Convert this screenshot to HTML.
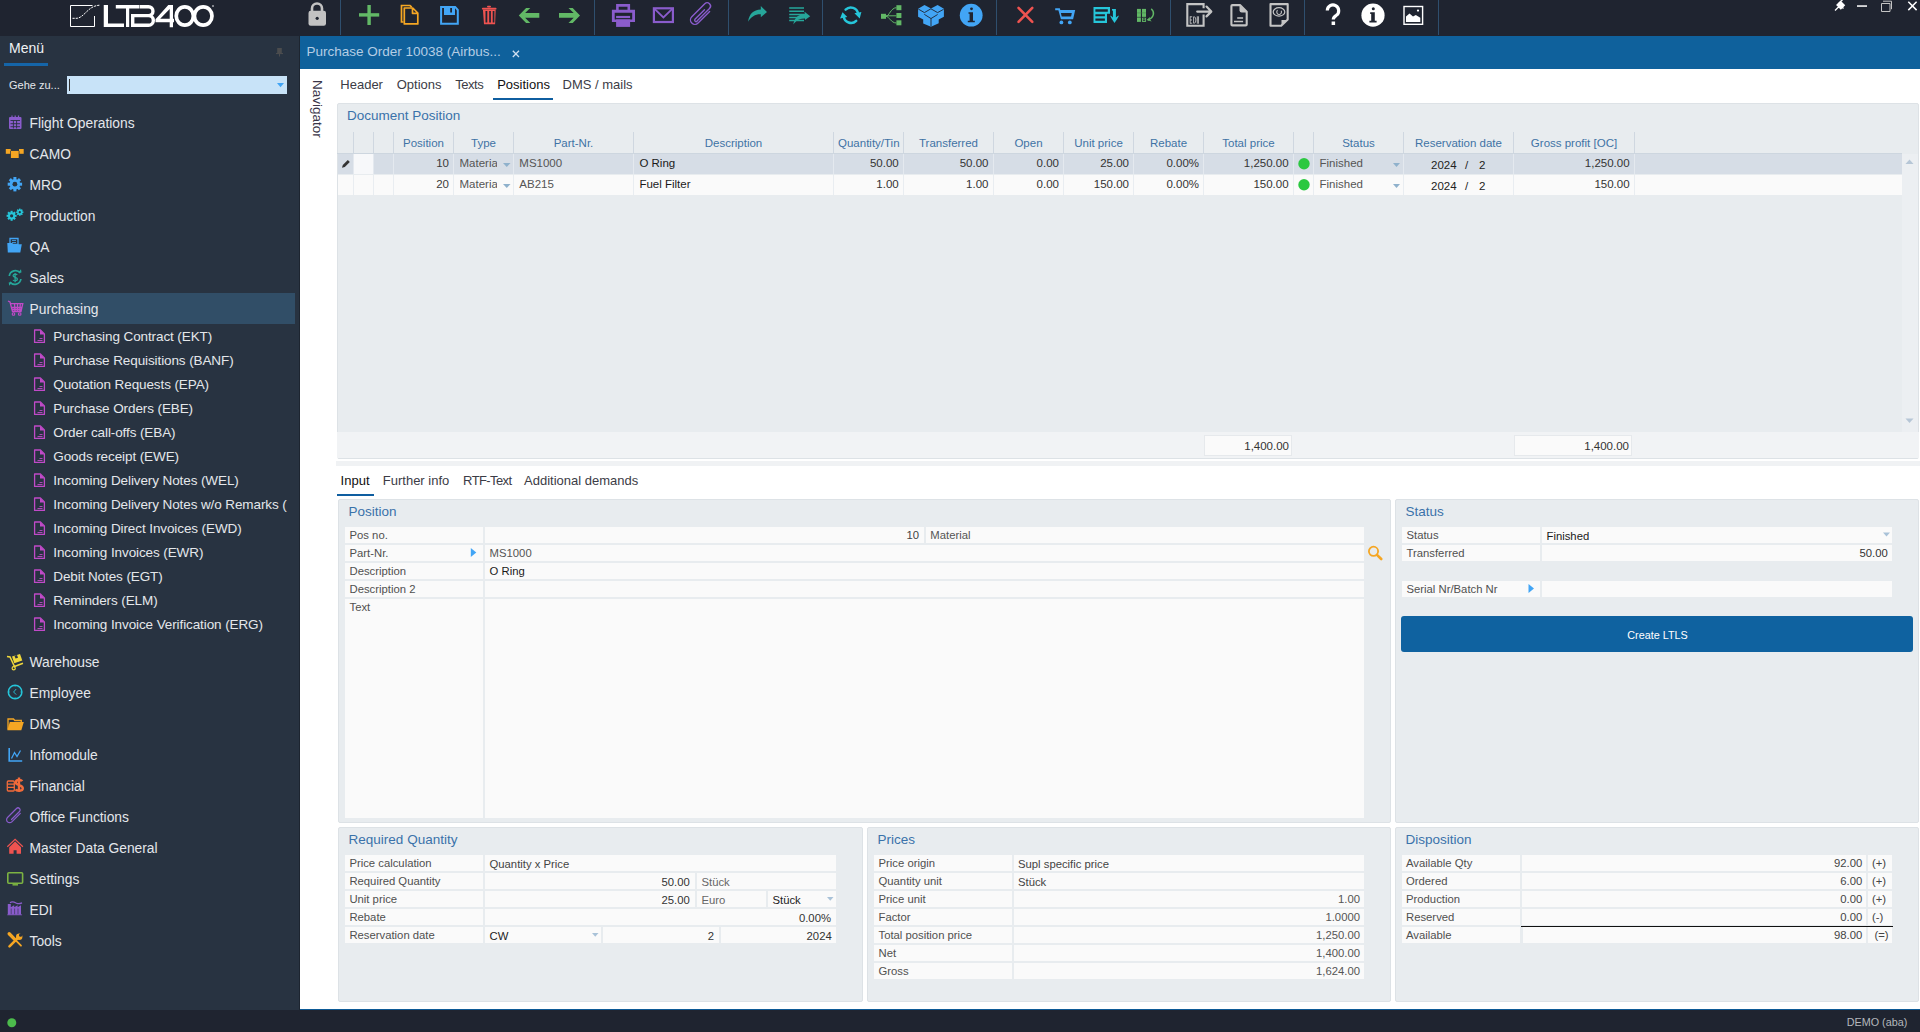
<!DOCTYPE html>
<html><head><meta charset="utf-8">
<style>
html,body{margin:0;padding:0;width:1920px;height:1032px;overflow:hidden;background:#1f2430;font-family:"Liberation Sans",sans-serif;}
.r{position:absolute;}
.t{position:absolute;white-space:nowrap;}
</style></head><body>
<div class="r" style="left:0px;top:0px;width:1920px;height:36px;background:#1f2430;"></div>
<svg class="r" style="left:0;top:0" width="1920" height="36"><line x1="340.5" y1="0" x2="340.5" y2="35" stroke="#2f4f6e" stroke-width="1"/><line x1="594.5" y1="0" x2="594.5" y2="35" stroke="#2f4f6e" stroke-width="1"/><line x1="728.5" y1="0" x2="728.5" y2="35" stroke="#2f4f6e" stroke-width="1"/><line x1="822.5" y1="0" x2="822.5" y2="35" stroke="#2f4f6e" stroke-width="1"/><line x1="996.5" y1="0" x2="996.5" y2="35" stroke="#2f4f6e" stroke-width="1"/><line x1="1170.5" y1="0" x2="1170.5" y2="35" stroke="#2f4f6e" stroke-width="1"/><line x1="1304.5" y1="0" x2="1304.5" y2="35" stroke="#2f4f6e" stroke-width="1"/><line x1="1438.5" y1="0" x2="1438.5" y2="35" stroke="#2f4f6e" stroke-width="1"/><path d="M92.5 5.5 H70.5 V26.5 H94.5 V16" fill="none" stroke="#fff" stroke-width="1"/><path d="M72.5 18.3 H77 C85 17 88 5.5 100 5.2" fill="none" stroke="#fff" stroke-width="1" stroke-dasharray="2.2 1"/><path d="M103.75 5 h4.25 v18.6 h16 v3.4 h-20.25z" fill="#fff"/><path d="M115.8 5 h23.6 v3.4 h-10.2 v18.6 h-3.2 v-18.6 h-10.2z" fill="#fff"/><path d="M139.8 6.7 H148.5 A4.45 4.45 0 0 1 148.5 15.6 H131 M148.5 15.6 A4.85 4.85 0 0 1 148.5 25.3 H131 M132.7 13.9 V27" fill="none" stroke="#fff" stroke-width="3.4"/><path d="M155.5 19.2 L168.3 5 H173 V18.8 H174 V22.3 H173 V27.2 H169.7 V22.3 H155.5 Z M160.2 18.8 L169.7 8.9 V18.8 Z" fill="#fff" fill-rule="evenodd"/><ellipse cx="184.8" cy="16" rx="8.55" ry="9.2" fill="none" stroke="#fff" stroke-width="3.7"/><ellipse cx="203.2" cy="16" rx="8.8" ry="9.2" fill="none" stroke="#fff" stroke-width="3.7"/><circle cx="213" cy="6" r="0.8" fill="#fff"/><path d="M312 11 V8.5 a5 5 0 0 1 10 0 V11" fill="none" stroke="#c2c2c2" stroke-width="2.6"/><rect x="308.5" y="10.8" width="17.5" height="15" rx="2.2" fill="#c2c2c2"/><circle cx="317.2" cy="18.3" r="1.6" fill="#1f2430"/><rect x="359" y="13.2" width="20.2" height="3.4" fill="#62b866"/><rect x="367.4" y="5" width="3.4" height="20" fill="#62b866"/><path d="M403.5 22 h-2 v-16.5 h8.5 l1.8 1.6" fill="none" stroke="#f5a623" stroke-width="1.7"/><path d="M404.3 8 h8.5 l5 5 v10.9 h-13.5z M412.5 8 v5.3 h5.3" fill="none" stroke="#f5a623" stroke-width="1.7" stroke-linejoin="round"/><path d="M440.1 6.1 H455.6 L458.8 9.6 V24.75 H440.1z M442.1 8 V22.75 H456.8 V10.4 L454.9 8z" fill="#42a5f5" fill-rule="evenodd"/><path d="M444 8 H455 V15 H444z M450.2 8 V12.6 H452 V8z" fill="#42a5f5" fill-rule="evenodd"/><rect x="481.9" y="7.7" width="14.6" height="1.9" rx="0.9" fill="#ef5350"/><rect x="487" y="5.8" width="4" height="1.6" rx="0.8" fill="#ef5350"/><path d="M482.9 9.6 H495.7 L495.1 24.2 H484z M485.5 11 V22.6 H487.3 V11z M489.2 11 V22.6 H490.9 V11z M492.7 11 V22.6 H494.4 V11z" fill="#ef5350" fill-rule="evenodd"/><path d="M518.8 15.4 l7.3 -7.5 h4.2 l-5.2 5.2 h14.2 v4.6 h-14.2 l5.2 5.2 h-4.2z" fill="#62b866"/><path d="M580 15.4 l-7.3 -7.5 h-4.2 l5.2 5.2 h-14.7 v4.6 h14.7 l-5.2 5.2 h4.2z" fill="#62b866"/><path d="M616.1 4.1 H630.1 V10 H627.5 V6.7 H618.7 V10 H616.1z" fill="#8a5ccc"/><path d="M611.9 9.7 H635 V21.9 H611.9z M614.7 12.8 V19.4 H632.2 V12.8z" fill="#8a5ccc" fill-rule="evenodd"/><rect x="616.1" y="15.9" width="14" height="2.2" fill="#8a5ccc"/><rect x="616.1" y="19.4" width="14" height="7.5" fill="#8a5ccc"/><rect x="653.9" y="8.3" width="19" height="13.7" fill="none" stroke="#8a5ccc" stroke-width="2.2"/><path d="M654.8 9.2 l8.6 8.3 l8.6 -8.3" fill="none" stroke="#8a5ccc" stroke-width="1.8"/><path d="M697 21 l12.5 -12.5 a3.3 3.3 0 0 0 -4.7 -4.7 l-13 13 a4.4 4.4 0 0 0 6.3 6.3 l11.5 -11.5 M704.5 9.7 l-9.5 9.5 a1.5 1.5 0 0 0 2.1 2.1" fill="none" stroke="#8a5ccc" stroke-width="1.4" stroke-linecap="round"/><path d="M748.1 21.7 C749 14 753.5 9.6 760.8 9.4 V6 L767 12.1 L760.8 17.2 V14.2 C755.5 14 751 16.5 748.1 21.7z" fill="#26a69a"/><path d="M789.2 8.1 h14.8 M789.2 11.25 h14.8 M789.2 14.4 h14.8 M789.2 17.5 h14.8 M789.2 20.6 h14.8" stroke="#26a69a" stroke-width="1.5"/><path d="M793.3 24.6 C794.5 17 799 14.2 804.6 14 V11.7 L810.2 16.3 L805 20 V18.4 C800 18.6 796.5 19.6 793.3 24.6z" fill="#26a69a"/><path d="M845.6 9.6 A7.4 7.4 0 0 1 858.1 13.8 M856.2 20.9 A7.4 7.4 0 0 1 843.7 16.4" fill="none" stroke="#26c6da" stroke-width="2.5" stroke-linecap="round"/><path d="M854.4 13.3 L861.4 12.1 L859.7 18.6z M840 18.6 L842.5 12.3 L847.3 17.1z" fill="#26c6da"/><rect x="881" y="13.8" width="5" height="5" fill="#62b866"/><rect x="896.4" y="5.2" width="5" height="5" fill="#62b866"/><rect x="896.4" y="13" width="5" height="5" fill="#62b866"/><rect x="896.4" y="20.3" width="5" height="5" fill="#62b866"/><path d="M886 16.3 c3 0 5 -8.6 10.4 -8.6 M886 15.8 h10.4 M886 16.3 c3 0 5 6.7 10.4 6.7" fill="none" stroke="#62b866" stroke-width="1"/><path d="M924.5 5 L931 8.6 L937.6 5 L943.9 8.8 V16.65 L938.7 19.4 V23.2 L931 26.7 L923.2 23.4 V19.4 L918.1 16.65 V8.8z" fill="#42a5f5"/><path d="M918.3 9.05 L924.4 12.6 L930.9 8.8 L937.6 12.6 L943.6 9.3 M924.3 14.35 L931 18.55 L937.6 14.5 M931 18.55 V26.5" fill="none" stroke="#1f2430" stroke-width="0.9"/><circle cx="971.2" cy="15.2" r="11.4" fill="#42a5f5"/><circle cx="971.5" cy="8.8" r="1.4" fill="#1f2430"/><path d="M968.5 12.2 h4.5 v8.5 h1.8 v1.6 h-7 v-1.6 h1.8 v-6.9 h-1.1z" fill="#1f2430"/><path d="M1018.5 7.9 L1032.3 21.9 M1032.3 7.9 L1018.5 21.9" stroke="#ef5350" stroke-width="2.6" stroke-linecap="round"/><path d="M1055.2 8.2 H1059.8 L1060.3 10 H1075.2 L1073.1 19.2 H1060.9 L1058.4 10.3 H1055.2z M1060.9 13 H1071.8 L1071.1 16.6 H1061.7z" fill="#42a5f5" fill-rule="evenodd"/><circle cx="1061.4" cy="22.4" r="1.9" fill="#42a5f5"/><circle cx="1069.8" cy="22.4" r="1.9" fill="#42a5f5"/><path d="M1093.5 7.1 H1110 V13.8 H1107 V23 H1093.5z M1095.4 9.3 V11.7 H1107.8 V9.3z M1095.4 14.2 V16.2 H1104.9 V14.2z M1095.4 18.4 V20.8 H1104.9 V18.4z" fill="#26c6da" fill-rule="evenodd"/><path d="M1112 9.1 h3.9 v8.5 c1 -1 2 -1.8 3.2 -2.2 c-1.2 2.5 -2.8 5 -4.6 7.6 c-1.8 -2.6 -3.4 -5.1 -4.5 -7.6 c1.2 0.4 2 1.2 2.9 2.2 v-6.8 l-0.9 -0.4z" fill="#26c6da"/><rect x="1137" y="8.9" width="3.9" height="13" fill="#62b866"/><rect x="1142" y="8.9" width="4" height="8.3" fill="#62b866"/><rect x="1142.5" y="18" width="3.1" height="3.5" fill="none" stroke="#62b866" stroke-width="0.9"/><circle cx="1144" cy="19.7" r="0.7" fill="#62b866"/><path d="M1137 17.3 h9" stroke="#1f2430" stroke-width="0.6"/><path d="M1137 12.9 h9" stroke="#3f7a45" stroke-width="0.5"/><path d="M1151.6 9.3 c2.8 2.5 3 7.5 -3.2 10.6" fill="none" stroke="#62b866" stroke-width="1.5" stroke-linecap="round"/><path d="M1146.6 19.9 l3.4 -2.9 l-0.3 2.2 l2 2.2z" fill="#62b866"/><path d="M1203.6 8.2 V4.1 H1187.3 V25.8 H1203.6 V14.6" fill="none" stroke="#c4c4c4" stroke-width="2.1"/><path d="M1197.2 11.6 H1210.5 M1206.5 6.6 L1211.3 11.6 L1206.5 16.4" fill="none" stroke="#c4c4c4" stroke-width="2.2" stroke-linecap="round" stroke-linejoin="round"/><path d="M1190.2 16.3 v7.4 M1190.2 16.8 h2 M1190.2 20 h1.8 M1190.2 23.2 h2 M1193.6 16.8 v6.4 h0.6 a1.7 3.2 0 0 0 0 -6.4z M1197.3 16.3 v7.4 M1198.4 16.3 v7.4" fill="none" stroke="#c4c4c4" stroke-width="0.9"/><path d="M1232.4 5.1 h7.6 l6.7 6.7 v12.6 a1 1 0 0 1 -1 1 h-13.3 a1 1 0 0 1 -1 -1 v-18.3 a1 1 0 0 1 1 -1z" fill="none" stroke="#c4c4c4" stroke-width="2.1" stroke-linejoin="round"/><path d="M1239.5 5.2 l7.2 7.2 h-5 a2.2 2.2 0 0 1 -2.2 -2.2z" fill="#c4c4c4"/><path d="M1237.2 18.1 h5.9 M1234 21.6 h9.1" stroke="#c4c4c4" stroke-width="1.5"/><path d="M1270.5 4.1 H1287.7 V19.5 L1281.2 25.8 H1270.5z" fill="none" stroke="#c4c4c4" stroke-width="2.1" stroke-linejoin="round"/><path d="M1281.5 25.5 V20 H1287.5z" fill="#c4c4c4"/><ellipse cx="1279" cy="11.9" rx="5.8" ry="4.2" fill="none" stroke="#c4c4c4" stroke-width="1.2"/><path d="M1277.5 10.2 c-1.3 1.5 -0.8 4 1.5 4.3 c2 0.2 3 -2 2.2 -3.8" fill="none" stroke="#c4c4c4" stroke-width="1.1"/><path d="M1327.3 10.5 a5.7 5.7 0 1 1 9 4.8 c-2 1.3 -3 2 -3 4.2" fill="none" stroke="#ffffff" stroke-width="3.2"/><rect x="1331.6" y="21.5" width="3.5" height="3.5" fill="#ffffff"/><circle cx="1373" cy="15.15" r="11.6" fill="#ffffff"/><circle cx="1373.3" cy="8.8" r="1.5" fill="#1f2430"/><path d="M1370.2 12.2 h4.6 v8.5 h1.8 v1.7 h-7.2 v-1.7 h1.8 v-6.8 h-1z" fill="#1f2430"/><rect x="1404" y="6.5" width="18.6" height="17.8" fill="none" stroke="#ffffff" stroke-width="1.4"/><path d="M1406 22 v-5.5 l3.5 -3 l3.5 3 l2.8 -1.5 l4.5 2.7 v4.3z" fill="#ffffff"/><circle cx="1418" cy="10.6" r="1.1" fill="#ffffff"/><path d="M1835 10.5 l4 -4 M1838 3 l5.5 5.5 M1840.5 1.5 l2 -1.5 M1837 5 l3.5 -3.5 l3.8 3.8 l-3.5 3.5z" stroke="#ffffff" stroke-width="1.3" fill="#ffffff"/><rect x="1857" y="5.3" width="10" height="1.5" fill="#ffffff"/><path d="M1883 1.2 h8.5 v8 M1881.5 3.5 h8.5 v8 h-8.5z" fill="none" stroke="#c4c4c4" stroke-width="1"/><path d="M1908.3 1.8 l8.3 8.3 M1916.6 1.8 l-8.3 8.3" stroke="#ffffff" stroke-width="1.5"/></svg>
<div class="r" style="left:0px;top:36px;width:300px;height:974px;background:#283341;"></div>
<div class="r" style="left:299px;top:36px;width:1px;height:974px;background:#1d2530;"></div>
<div class="t" style="top:40px;font-size:14px;line-height:16px;color:#f0f2f4;left:9px;">Menü</div>
<div class="r" style="left:4px;top:63px;width:44px;height:3px;background:#1565a8;"></div>
<svg class="r" style="left:276px;top:48px" width="8" height="9" viewBox="0 0 8 9"><rect x="1.2" y="0" width="4.6" height="5.2" fill="#4b4c4e"/><rect x="0" y="5" width="7" height="1.1" fill="#4b4c4e"/><rect x="3" y="6" width="1" height="2.5" fill="#4b4c4e"/></svg>
<div class="t" style="top:79px;font-size:11px;line-height:12px;color:#e4e7eb;left:9px;">Gehe zu...</div>
<div class="r" style="left:67px;top:76px;width:220px;height:18px;background:#c8e3f8;"></div>
<div class="r" style="left:69px;top:79px;width:1px;height:12px;background:#333;"></div>
<svg class="r" style="left:277px;top:83px" width="8" height="5" viewBox="0 0 8 5"><path d="M0 0 h7 l-3.5 4.2z" fill="#42a5f5"/></svg>
<div class="r" style="left:2px;top:293px;width:293px;height:31px;background:#314e67;"></div>
<div class="t" style="top:116px;font-size:13.8px;line-height:15px;color:#e4e7eb;left:29.5px;">Flight Operations</div>
<div class="t" style="top:147px;font-size:13.8px;line-height:15px;color:#e4e7eb;left:29.5px;">CAMO</div>
<div class="t" style="top:178px;font-size:13.8px;line-height:15px;color:#e4e7eb;left:29.5px;">MRO</div>
<div class="t" style="top:209px;font-size:13.8px;line-height:15px;color:#e4e7eb;left:29.5px;">Production</div>
<div class="t" style="top:240px;font-size:13.8px;line-height:15px;color:#e4e7eb;left:29.5px;">QA</div>
<div class="t" style="top:271px;font-size:13.8px;line-height:15px;color:#e4e7eb;left:29.5px;">Sales</div>
<div class="t" style="top:302px;font-size:13.8px;line-height:15px;color:#e4e7eb;left:29.5px;">Purchasing</div>
<div class="t" style="top:329px;font-size:13.5px;line-height:15px;color:#e4e7eb;left:53.3px;width:242px;overflow:hidden;white-space:nowrap;letter-spacing:-0.1px;">Purchasing Contract (EKT)</div>
<div class="t" style="top:353px;font-size:13.5px;line-height:15px;color:#e4e7eb;left:53.3px;width:242px;overflow:hidden;white-space:nowrap;letter-spacing:-0.1px;">Purchase Requisitions (BANF)</div>
<div class="t" style="top:377px;font-size:13.5px;line-height:15px;color:#e4e7eb;left:53.3px;width:242px;overflow:hidden;white-space:nowrap;letter-spacing:-0.1px;">Quotation Requests (EPA)</div>
<div class="t" style="top:401px;font-size:13.5px;line-height:15px;color:#e4e7eb;left:53.3px;width:242px;overflow:hidden;white-space:nowrap;letter-spacing:-0.1px;">Purchase Orders (EBE)</div>
<div class="t" style="top:425px;font-size:13.5px;line-height:15px;color:#e4e7eb;left:53.3px;width:242px;overflow:hidden;white-space:nowrap;letter-spacing:-0.1px;">Order call-offs (EBA)</div>
<div class="t" style="top:449px;font-size:13.5px;line-height:15px;color:#e4e7eb;left:53.3px;width:242px;overflow:hidden;white-space:nowrap;letter-spacing:-0.1px;">Goods receipt (EWE)</div>
<div class="t" style="top:473px;font-size:13.5px;line-height:15px;color:#e4e7eb;left:53.3px;width:242px;overflow:hidden;white-space:nowrap;letter-spacing:-0.1px;">Incoming Delivery Notes (WEL)</div>
<div class="t" style="top:497px;font-size:13.5px;line-height:15px;color:#e4e7eb;left:53.3px;width:242px;overflow:hidden;white-space:nowrap;letter-spacing:-0.1px;">Incoming Delivery Notes w/o Remarks (</div>
<div class="t" style="top:521px;font-size:13.5px;line-height:15px;color:#e4e7eb;left:53.3px;width:242px;overflow:hidden;white-space:nowrap;letter-spacing:-0.1px;">Incoming Direct Invoices (EWD)</div>
<div class="t" style="top:545px;font-size:13.5px;line-height:15px;color:#e4e7eb;left:53.3px;width:242px;overflow:hidden;white-space:nowrap;letter-spacing:-0.1px;">Incoming Invoices (EWR)</div>
<div class="t" style="top:569px;font-size:13.5px;line-height:15px;color:#e4e7eb;left:53.3px;width:242px;overflow:hidden;white-space:nowrap;letter-spacing:-0.1px;">Debit Notes (EGT)</div>
<div class="t" style="top:593px;font-size:13.5px;line-height:15px;color:#e4e7eb;left:53.3px;width:242px;overflow:hidden;white-space:nowrap;letter-spacing:-0.1px;">Reminders (ELM)</div>
<div class="t" style="top:617px;font-size:13.5px;line-height:15px;color:#e4e7eb;left:53.3px;width:242px;overflow:hidden;white-space:nowrap;letter-spacing:-0.1px;">Incoming Invoice Verification (ERG)</div>
<div class="t" style="top:655px;font-size:13.8px;line-height:15px;color:#e4e7eb;left:29.5px;">Warehouse</div>
<div class="t" style="top:686px;font-size:13.8px;line-height:15px;color:#e4e7eb;left:29.5px;">Employee</div>
<div class="t" style="top:717px;font-size:13.8px;line-height:15px;color:#e4e7eb;left:29.5px;">DMS</div>
<div class="t" style="top:748px;font-size:13.8px;line-height:15px;color:#e4e7eb;left:29.5px;">Infomodule</div>
<div class="t" style="top:779px;font-size:13.8px;line-height:15px;color:#e4e7eb;left:29.5px;">Financial</div>
<div class="t" style="top:810px;font-size:13.8px;line-height:15px;color:#e4e7eb;left:29.5px;">Office Functions</div>
<div class="t" style="top:841px;font-size:13.8px;line-height:15px;color:#e4e7eb;left:29.5px;">Master Data General</div>
<div class="t" style="top:872px;font-size:13.8px;line-height:15px;color:#e4e7eb;left:29.5px;">Settings</div>
<div class="t" style="top:903px;font-size:13.8px;line-height:15px;color:#e4e7eb;left:29.5px;">EDI</div>
<div class="t" style="top:934px;font-size:13.8px;line-height:15px;color:#e4e7eb;left:29.5px;">Tools</div>
<svg class="r" style="left:0;top:0" width="300" height="1010"><rect x="9" y="117.0" width="12.5" height="12" rx="1" fill="#8a5ccc"/><path d="M10.5 120.5 h9.5 M10.5 123.7 h9.5 M10.5 126.7 h9.5 M13.4 120.5 v8 M16.6 120.5 v8" stroke="#283341" stroke-width="0.9"/><path d="M12 115.5 v3 M15.2 115.5 v3 M18.5 115.5 v3" stroke="#8a5ccc" stroke-width="1.2"/><rect x="5.8" y="149.0" width="4.4" height="4.8" fill="#f5a623"/><rect x="19.4" y="149.0" width="4.3" height="4.8" fill="#f5a623"/><rect x="10.9" y="150.9" width="7.8" height="7.1" fill="#f5a623"/><rect x="8" y="149.0" width="2.6" height="2" fill="#f5a623"/><rect x="19" y="149.0" width="2.6" height="2" fill="#f5a623"/><circle cx="14.9" cy="184.2" r="5.3" fill="#42a5f5"/><rect x="13.39" y="177.00" width="3.02" height="7.20" fill="#42a5f5" transform="rotate(0.0 14.9 184.2)"/><rect x="13.39" y="177.00" width="3.02" height="7.20" fill="#42a5f5" transform="rotate(45.0 14.9 184.2)"/><rect x="13.39" y="177.00" width="3.02" height="7.20" fill="#42a5f5" transform="rotate(90.0 14.9 184.2)"/><rect x="13.39" y="177.00" width="3.02" height="7.20" fill="#42a5f5" transform="rotate(135.0 14.9 184.2)"/><rect x="13.39" y="177.00" width="3.02" height="7.20" fill="#42a5f5" transform="rotate(180.0 14.9 184.2)"/><rect x="13.39" y="177.00" width="3.02" height="7.20" fill="#42a5f5" transform="rotate(225.0 14.9 184.2)"/><rect x="13.39" y="177.00" width="3.02" height="7.20" fill="#42a5f5" transform="rotate(270.0 14.9 184.2)"/><rect x="13.39" y="177.00" width="3.02" height="7.20" fill="#42a5f5" transform="rotate(315.0 14.9 184.2)"/><circle cx="14.9" cy="184.2" r="2.4" fill="#283341"/><circle cx="11.6" cy="215.8" r="3.6" fill="#26c6da"/><rect x="10.55" y="210.80" width="2.10" height="5.00" fill="#26c6da" transform="rotate(0.0 11.6 215.8)"/><rect x="10.55" y="210.80" width="2.10" height="5.00" fill="#26c6da" transform="rotate(45.0 11.6 215.8)"/><rect x="10.55" y="210.80" width="2.10" height="5.00" fill="#26c6da" transform="rotate(90.0 11.6 215.8)"/><rect x="10.55" y="210.80" width="2.10" height="5.00" fill="#26c6da" transform="rotate(135.0 11.6 215.8)"/><rect x="10.55" y="210.80" width="2.10" height="5.00" fill="#26c6da" transform="rotate(180.0 11.6 215.8)"/><rect x="10.55" y="210.80" width="2.10" height="5.00" fill="#26c6da" transform="rotate(225.0 11.6 215.8)"/><rect x="10.55" y="210.80" width="2.10" height="5.00" fill="#26c6da" transform="rotate(270.0 11.6 215.8)"/><rect x="10.55" y="210.80" width="2.10" height="5.00" fill="#26c6da" transform="rotate(315.0 11.6 215.8)"/><circle cx="11.6" cy="215.8" r="1.6" fill="#283341"/><circle cx="19.8" cy="212.2" r="2.6" fill="#26c6da"/><rect x="19.04" y="208.60" width="1.51" height="3.60" fill="#26c6da" transform="rotate(0.0 19.8 212.2)"/><rect x="19.04" y="208.60" width="1.51" height="3.60" fill="#26c6da" transform="rotate(45.0 19.8 212.2)"/><rect x="19.04" y="208.60" width="1.51" height="3.60" fill="#26c6da" transform="rotate(90.0 19.8 212.2)"/><rect x="19.04" y="208.60" width="1.51" height="3.60" fill="#26c6da" transform="rotate(135.0 19.8 212.2)"/><rect x="19.04" y="208.60" width="1.51" height="3.60" fill="#26c6da" transform="rotate(180.0 19.8 212.2)"/><rect x="19.04" y="208.60" width="1.51" height="3.60" fill="#26c6da" transform="rotate(225.0 19.8 212.2)"/><rect x="19.04" y="208.60" width="1.51" height="3.60" fill="#26c6da" transform="rotate(270.0 19.8 212.2)"/><rect x="19.04" y="208.60" width="1.51" height="3.60" fill="#26c6da" transform="rotate(315.0 19.8 212.2)"/><circle cx="19.8" cy="212.2" r="1.1" fill="#283341"/><path d="M10 238.5 h8 v6 h-8z" fill="none" stroke="#42a5f5" stroke-width="1.3"/><path d="M12 240.5 h4 M12 242.5 h4" stroke="#42a5f5" stroke-width="0.8"/><path d="M7.3 243.0 h5 l1 1.2 h8.5 l-1.5 8.3 h-12.5z" fill="#42a5f5"/><path d="M9.3 276.0 a6.2 6.2 0 0 1 11 -3 M20.9 279.0 a6.2 6.2 0 0 1 -11 3" fill="none" stroke="#26a69a" stroke-width="1.7"/><path d="M18.3 272.2 l3.2 0.3 l-0.5 -3.2z M11.9 282.8 l-3.2 -0.3 l0.5 3.2z" fill="#26a69a"/><path d="M17.2 274.9 c-0.6 -1.1 -4.1 -1.3 -4.1 0.8 c0 2 4.3 1.3 4.3 3.4 c0 2.2 -3.7 2 -4.4 0.9 M15.1 272.9 v9.4" fill="none" stroke="#26a69a" stroke-width="1.3"/><path d="M8 301.0 l2 1 l2.5 9.5 h8.5 l1.8 -7.8 h-11.8 M12 307.5 h10 M12.5 309.5 h9 M14.5 303.5 l0.5 8 M17.5 303.5 v8 M20.3 303.5 l-0.5 8" fill="none" stroke="#c04ac8" stroke-width="1.3"/><circle cx="13.5" cy="314.0" r="1.3" fill="none" stroke="#c04ac8" stroke-width="1.1"/><circle cx="19.7" cy="314.0" r="1.3" fill="none" stroke="#c04ac8" stroke-width="1.1"/><path d="M34.6 330 h5.8 l4 4 v8.4 h-9.8z" fill="none" stroke="#c04ac8" stroke-width="1.3" stroke-linejoin="round"/><path d="M40 330 l4.5 4.5 h-4.5z" fill="#c04ac8"/><path d="M39.5 338.5 h3 M37.5 340.5 h5" stroke="#c04ac8" stroke-width="0.9"/><path d="M34.6 354 h5.8 l4 4 v8.4 h-9.8z" fill="none" stroke="#c04ac8" stroke-width="1.3" stroke-linejoin="round"/><path d="M40 354 l4.5 4.5 h-4.5z" fill="#c04ac8"/><path d="M39.5 362.5 h3 M37.5 364.5 h5" stroke="#c04ac8" stroke-width="0.9"/><path d="M34.6 378 h5.8 l4 4 v8.4 h-9.8z" fill="none" stroke="#c04ac8" stroke-width="1.3" stroke-linejoin="round"/><path d="M40 378 l4.5 4.5 h-4.5z" fill="#c04ac8"/><path d="M39.5 386.5 h3 M37.5 388.5 h5" stroke="#c04ac8" stroke-width="0.9"/><path d="M34.6 402 h5.8 l4 4 v8.4 h-9.8z" fill="none" stroke="#c04ac8" stroke-width="1.3" stroke-linejoin="round"/><path d="M40 402 l4.5 4.5 h-4.5z" fill="#c04ac8"/><path d="M39.5 410.5 h3 M37.5 412.5 h5" stroke="#c04ac8" stroke-width="0.9"/><path d="M34.6 426 h5.8 l4 4 v8.4 h-9.8z" fill="none" stroke="#c04ac8" stroke-width="1.3" stroke-linejoin="round"/><path d="M40 426 l4.5 4.5 h-4.5z" fill="#c04ac8"/><path d="M39.5 434.5 h3 M37.5 436.5 h5" stroke="#c04ac8" stroke-width="0.9"/><path d="M34.6 450 h5.8 l4 4 v8.4 h-9.8z" fill="none" stroke="#c04ac8" stroke-width="1.3" stroke-linejoin="round"/><path d="M40 450 l4.5 4.5 h-4.5z" fill="#c04ac8"/><path d="M39.5 458.5 h3 M37.5 460.5 h5" stroke="#c04ac8" stroke-width="0.9"/><path d="M34.6 474 h5.8 l4 4 v8.4 h-9.8z" fill="none" stroke="#c04ac8" stroke-width="1.3" stroke-linejoin="round"/><path d="M40 474 l4.5 4.5 h-4.5z" fill="#c04ac8"/><path d="M39.5 482.5 h3 M37.5 484.5 h5" stroke="#c04ac8" stroke-width="0.9"/><path d="M34.6 498 h5.8 l4 4 v8.4 h-9.8z" fill="none" stroke="#c04ac8" stroke-width="1.3" stroke-linejoin="round"/><path d="M40 498 l4.5 4.5 h-4.5z" fill="#c04ac8"/><path d="M39.5 506.5 h3 M37.5 508.5 h5" stroke="#c04ac8" stroke-width="0.9"/><path d="M34.6 522 h5.8 l4 4 v8.4 h-9.8z" fill="none" stroke="#c04ac8" stroke-width="1.3" stroke-linejoin="round"/><path d="M40 522 l4.5 4.5 h-4.5z" fill="#c04ac8"/><path d="M39.5 530.5 h3 M37.5 532.5 h5" stroke="#c04ac8" stroke-width="0.9"/><path d="M34.6 546 h5.8 l4 4 v8.4 h-9.8z" fill="none" stroke="#c04ac8" stroke-width="1.3" stroke-linejoin="round"/><path d="M40 546 l4.5 4.5 h-4.5z" fill="#c04ac8"/><path d="M39.5 554.5 h3 M37.5 556.5 h5" stroke="#c04ac8" stroke-width="0.9"/><path d="M34.6 570 h5.8 l4 4 v8.4 h-9.8z" fill="none" stroke="#c04ac8" stroke-width="1.3" stroke-linejoin="round"/><path d="M40 570 l4.5 4.5 h-4.5z" fill="#c04ac8"/><path d="M39.5 578.5 h3 M37.5 580.5 h5" stroke="#c04ac8" stroke-width="0.9"/><path d="M34.6 594 h5.8 l4 4 v8.4 h-9.8z" fill="none" stroke="#c04ac8" stroke-width="1.3" stroke-linejoin="round"/><path d="M40 594 l4.5 4.5 h-4.5z" fill="#c04ac8"/><path d="M39.5 602.5 h3 M37.5 604.5 h5" stroke="#c04ac8" stroke-width="0.9"/><path d="M34.6 618 h5.8 l4 4 v8.4 h-9.8z" fill="none" stroke="#c04ac8" stroke-width="1.3" stroke-linejoin="round"/><path d="M40 618 l4.5 4.5 h-4.5z" fill="#c04ac8"/><path d="M39.5 626.5 h3 M37.5 628.5 h5" stroke="#c04ac8" stroke-width="0.9"/><path d="M7 656.5 l3 0.5 l4.5 9.5 l8.5 -3.2" fill="none" stroke="#f0d83c" stroke-width="1.5"/><circle cx="13.7" cy="668.2" r="1.6" fill="none" stroke="#f0d83c" stroke-width="1.2"/><path d="M12 656.5 l8 -2.5 l2.3 6.5 l-8 2.8z" fill="#f0d83c"/><path d="M14.5 655.8 l1 2.7 l2.5 -0.8 l-1 -2.7" fill="#283341"/><circle cx="15.1" cy="692" r="6.8" fill="none" stroke="#26c6da" stroke-width="1.5"/><path d="M16.2 689 l-2.6 3 l2.6 2.6" fill="none" stroke="#26c6da" stroke-width="0.9"/><path d="M15.1 685.5 v1.3 M15.1 697.2 v1.3 M8.6 692 h1.3 M20.3 692 h1.3" stroke="#26c6da" stroke-width="0.8"/><path d="M8 729.5 v-10.5 h5.5 l1.3 1.5 h6.5 v2" fill="none" stroke="#f5a623" stroke-width="1.3"/><path d="M7.3 730.3 l2.5 -8.2 h14 l-2.5 8.2z" fill="#f5a623"/><path d="M9.2 748 v13 h13" fill="none" stroke="#42a5f5" stroke-width="1.6"/><path d="M11.5 758.5 l3 -6 l2.5 4 l3.5 -6" fill="none" stroke="#42a5f5" stroke-width="1.3"/><rect x="7.3" y="781" width="7" height="10" rx="1" fill="none" stroke="#f26b3a" stroke-width="1.3"/><path d="M7.5 784.2 h6.5 M7.5 787.4 h6.5" stroke="#f26b3a" stroke-width="1.2"/><path d="M22.3 781.2 c-1 -1.5 -6.5 -2 -6.5 1.2 c0 3.3 7 2 7 5.8 c0 3.3 -6.2 3 -7.2 1.2 M19 777.5 v14.5" fill="none" stroke="#f26b3a" stroke-width="2.4"/><path d="M11.5 819.5 l8 -8 a2 2 0 0 0 -3 -3 l-9 9 a3 3 0 0 0 4.3 4.3 l8.5 -8.5" fill="none" stroke="#8a5ccc" stroke-width="1.2" stroke-linecap="round"/><path d="M7.3 846.7 l7.8 -7.4 l7.8 7.4" fill="none" stroke="#ef5350" stroke-width="1.2"/><path d="M9.2 847.2 l5.9 -5.6 l5.9 5.6 v6.6 h-4.4 v-3.5 h-3 v3.5 h-4.4z" fill="#ef5350"/><rect x="7.8" y="872.7" width="14.8" height="10.6" rx="1" fill="none" stroke="#7cb342" stroke-width="1.6"/><path d="M12.5 884.8 h5.5" stroke="#7cb342" stroke-width="1.5"/><path d="M14.5 883.3 v1" stroke="#7cb342" stroke-width="1"/><path d="M7.8 914.8 V904 h3 v3.2 l3.4 -2 v2 l3.4 -2 v2 l3.4 -2 V914.8z" fill="#8a5ccc"/><path d="M11.2 908.5 v6 M14.6 908.5 v6 M18 908.5 v6" stroke="#283341" stroke-width="0.6"/><path d="M7.3 914.8 h14.8" stroke="#8a5ccc" stroke-width="0.8"/><path d="M10 902.7 c2.5 -1.8 4.5 -0.5 6.5 0.5 s3.5 0.6 5.5 -0.3" fill="none" stroke="#8a5ccc" stroke-width="1.2"/><path d="M9.2 933.8 l5.8 5.8" stroke="#f5a623" stroke-width="3.4" stroke-linecap="round"/><path d="M14.5 939.2 l6.5 6.5" stroke="#f5a623" stroke-width="1.8" stroke-linecap="round"/><path d="M9.5 946.3 l8.5 -8.5" stroke="#f5a623" stroke-width="2.6" stroke-linecap="round"/><circle cx="19.2" cy="936.7" r="3.2" fill="#f5a623"/><circle cx="20.6" cy="935.2" r="1.6" fill="#283341"/><path d="M20 935.7 l3 -3" stroke="#283341" stroke-width="1.8"/></svg>
<div class="r" style="left:300px;top:36px;width:1620px;height:33px;background:#0f619c;"></div>
<div class="t" style="top:44px;font-size:13.5px;line-height:15px;color:#b4cde4;left:306.5px;">Purchase Order 10038 (Airbus...</div>
<svg class="r" style="left:511.5px;top:49.5px" width="8" height="8" viewBox="0 0 8 8"><path d="M0.8 0.8 l6.2 6.2 M7 0.8 l-6.2 6.2" stroke="#d0dff0" stroke-width="1.3"/></svg>
<div class="r" style="left:300px;top:69px;width:1620px;height:940px;background:#ffffff;"></div>
<div class="r" style="left:300px;top:1009px;width:1620px;height:1px;background:#0d5a96;"></div>
<div class="t" style="left:310px;top:80px;font-size:13.5px;line-height:14px;color:#3a3548;writing-mode:vertical-rl;">Navigator</div>
<div class="t" style="top:77px;font-size:13px;line-height:15px;color:#3c3c46;left:340.3px;">Header</div>
<div class="t" style="top:77px;font-size:13px;line-height:15px;color:#3c3c46;left:396.7px;">Options</div>
<div class="t" style="top:77px;font-size:13px;line-height:15px;color:#3c3c46;left:455.3px;letter-spacing:-0.5px;">Texts</div>
<div class="t" style="top:77px;font-size:13px;line-height:15px;color:#111;left:497.2px;">Positions</div>
<div class="t" style="top:77px;font-size:13px;line-height:15px;color:#3c3c46;left:562.5px;">DMS / mails</div>
<div class="r" style="left:493px;top:98px;width:60px;height:2px;background:#0f5ea0;"></div>
<div class="r" style="left:337px;top:103px;width:1582px;height:356px;background:#e8ecef;border:1px solid #dde2e6;box-sizing:border-box;border-radius:2px;"></div>
<div class="t" style="top:108px;font-size:13.5px;line-height:15px;color:#3a72aa;left:347px;">Document Position</div>
<div class="r" style="left:353.0px;top:132px;width:1px;height:21px;background:#cfd7e0;"></div>
<div class="r" style="left:373.0px;top:132px;width:1px;height:21px;background:#cfd7e0;"></div>
<div class="r" style="left:393.0px;top:132px;width:1px;height:21px;background:#cfd7e0;"></div>
<div class="r" style="left:453.0px;top:132px;width:1px;height:21px;background:#cfd7e0;"></div>
<div class="r" style="left:513.0px;top:132px;width:1px;height:21px;background:#cfd7e0;"></div>
<div class="r" style="left:633.0px;top:132px;width:1px;height:21px;background:#cfd7e0;"></div>
<div class="r" style="left:833.0px;top:132px;width:1px;height:21px;background:#cfd7e0;"></div>
<div class="r" style="left:903.0px;top:132px;width:1px;height:21px;background:#cfd7e0;"></div>
<div class="r" style="left:993.0px;top:132px;width:1px;height:21px;background:#cfd7e0;"></div>
<div class="r" style="left:1063.0px;top:132px;width:1px;height:21px;background:#cfd7e0;"></div>
<div class="r" style="left:1133.0px;top:132px;width:1px;height:21px;background:#cfd7e0;"></div>
<div class="r" style="left:1203.0px;top:132px;width:1px;height:21px;background:#cfd7e0;"></div>
<div class="r" style="left:1293.0px;top:132px;width:1px;height:21px;background:#cfd7e0;"></div>
<div class="r" style="left:1313.0px;top:132px;width:1px;height:21px;background:#cfd7e0;"></div>
<div class="r" style="left:1403.0px;top:132px;width:1px;height:21px;background:#cfd7e0;"></div>
<div class="r" style="left:1513.0px;top:132px;width:1px;height:21px;background:#cfd7e0;"></div>
<div class="r" style="left:1634.0px;top:132px;width:1px;height:21px;background:#cfd7e0;"></div>
<div class="r" style="left:337px;top:153px;width:1565px;height:1px;background:#cdd6df;"></div>
<div class="t" style="top:137px;font-size:11.5px;line-height:12px;color:#3f73a5;left:393.5px;width:60.0px;text-align:center;">Position</div>
<div class="t" style="top:137px;font-size:11.5px;line-height:12px;color:#3f73a5;left:453.5px;width:60.0px;text-align:center;">Type</div>
<div class="t" style="top:137px;font-size:11.5px;line-height:12px;color:#3f73a5;left:513.5px;width:120.0px;text-align:center;">Part-Nr.</div>
<div class="t" style="top:137px;font-size:11.5px;line-height:12px;color:#3f73a5;left:633.5px;width:200.0px;text-align:center;">Description</div>
<div class="t" style="top:137px;font-size:11.5px;line-height:12px;color:#3f73a5;left:903.5px;width:90.0px;text-align:center;">Transferred</div>
<div class="t" style="top:137px;font-size:11.5px;line-height:12px;color:#3f73a5;left:993.5px;width:70.0px;text-align:center;">Open</div>
<div class="t" style="top:137px;font-size:11.5px;line-height:12px;color:#3f73a5;left:1063.5px;width:70.0px;text-align:center;">Unit price</div>
<div class="t" style="top:137px;font-size:11.5px;line-height:12px;color:#3f73a5;left:1133.5px;width:70.0px;text-align:center;">Rebate</div>
<div class="t" style="top:137px;font-size:11.5px;line-height:12px;color:#3f73a5;left:1203.5px;width:90.0px;text-align:center;">Total price</div>
<div class="t" style="top:137px;font-size:11.5px;line-height:12px;color:#3f73a5;left:1313.5px;width:90.0px;text-align:center;">Status</div>
<div class="t" style="top:137px;font-size:11.5px;line-height:12px;color:#3f73a5;left:1403.5px;width:110.0px;text-align:center;">Reservation date</div>
<div class="t" style="top:137px;font-size:11.5px;line-height:12px;color:#3f73a5;left:1513.5px;width:121.0px;text-align:center;">Gross profit [OC]</div>
<div class="t" style="top:137px;font-size:11.5px;line-height:12px;color:#3f73a5;left:838px;width:64px;overflow:hidden;white-space:nowrap;">Quantity/Tin</div>
<div class="r" style="left:338px;top:154px;width:1564px;height:20px;background:#d6dde6;"></div>
<div class="r" style="left:354px;top:154px;width:19px;height:20px;background:#f7f8fa;"></div>
<div class="r" style="left:353.0px;top:154px;width:1px;height:20px;background:#e4e9ef;"></div>
<div class="r" style="left:373.0px;top:154px;width:1px;height:20px;background:#e4e9ef;"></div>
<div class="r" style="left:393.0px;top:154px;width:1px;height:20px;background:#e4e9ef;"></div>
<div class="r" style="left:453.0px;top:154px;width:1px;height:20px;background:#e4e9ef;"></div>
<div class="r" style="left:513.0px;top:154px;width:1px;height:20px;background:#e4e9ef;"></div>
<div class="r" style="left:633.0px;top:154px;width:1px;height:20px;background:#e4e9ef;"></div>
<div class="r" style="left:833.0px;top:154px;width:1px;height:20px;background:#e4e9ef;"></div>
<div class="r" style="left:903.0px;top:154px;width:1px;height:20px;background:#e4e9ef;"></div>
<div class="r" style="left:993.0px;top:154px;width:1px;height:20px;background:#e4e9ef;"></div>
<div class="r" style="left:1063.0px;top:154px;width:1px;height:20px;background:#e4e9ef;"></div>
<div class="r" style="left:1133.0px;top:154px;width:1px;height:20px;background:#e4e9ef;"></div>
<div class="r" style="left:1203.0px;top:154px;width:1px;height:20px;background:#e4e9ef;"></div>
<div class="r" style="left:1293.0px;top:154px;width:1px;height:20px;background:#e4e9ef;"></div>
<div class="r" style="left:1313.0px;top:154px;width:1px;height:20px;background:#e4e9ef;"></div>
<div class="r" style="left:1403.0px;top:154px;width:1px;height:20px;background:#e4e9ef;"></div>
<div class="r" style="left:1513.0px;top:154px;width:1px;height:20px;background:#e4e9ef;"></div>
<div class="r" style="left:1634.0px;top:154px;width:1px;height:20px;background:#e4e9ef;"></div>
<div class="r" style="left:338px;top:174px;width:1564px;height:1px;background:#e8ecef;"></div>
<div class="t" style="top:157px;font-size:11.5px;line-height:12px;color:#3a3a3a;right:1471px;text-align:right;">10</div>
<div class="t" style="top:157px;font-size:11.5px;line-height:12px;color:#555;left:459.5px;width:37px;overflow:hidden;white-space:nowrap;">Materia</div>
<svg class="r" style="left:502.5px;top:163px" width="8" height="5" viewBox="0 0 8 5"><path d="M0 0 h7.5 l-3.75 4z" fill="#8fb1cc"/></svg>
<div class="t" style="top:157px;font-size:11.5px;line-height:12px;color:#555;left:519.3px;">MS1000</div>
<div class="t" style="top:157px;font-size:11.5px;line-height:12px;color:#1a1a1a;left:639.4px;">O Ring</div>
<div class="t" style="top:157px;font-size:11.5px;line-height:12px;color:#333;right:1021.3px;text-align:right;">50.00</div>
<div class="t" style="top:157px;font-size:11.5px;line-height:12px;color:#333;right:931.5px;text-align:right;">50.00</div>
<div class="t" style="top:157px;font-size:11.5px;line-height:12px;color:#333;right:861px;text-align:right;">0.00</div>
<div class="t" style="top:157px;font-size:11.5px;line-height:12px;color:#333;right:791px;text-align:right;">25.00</div>
<div class="t" style="top:157px;font-size:11.5px;line-height:12px;color:#333;right:721px;text-align:right;">0.00%</div>
<div class="t" style="top:157px;font-size:11.5px;line-height:12px;color:#333;right:631.4000000000001px;text-align:right;">1,250.00</div>
<svg class="r" style="left:1298px;top:158px" width="12" height="12" viewBox="0 0 12 12"><circle cx="6" cy="5.7" r="5.7" fill="#2bc840"/></svg>
<div class="t" style="top:157px;font-size:11.5px;line-height:12px;color:#555;left:1319.5px;">Finished</div>
<svg class="r" style="left:1393px;top:163px" width="8" height="5" viewBox="0 0 8 5"><path d="M0 0 h7 l-3.5 4z" fill="#8fb1cc"/></svg>
<div class="t" style="top:159px;font-size:11.5px;line-height:12px;color:#222;left:1431px;">2024</div>
<div class="t" style="top:159px;font-size:11.5px;line-height:12px;color:#222;left:1465px;">/</div>
<div class="t" style="top:159px;font-size:11.5px;line-height:12px;color:#222;left:1479px;">2</div>
<div class="t" style="top:157px;font-size:11.5px;line-height:12px;color:#333;right:290.4000000000001px;text-align:right;">1,250.00</div>
<div class="r" style="left:338px;top:175px;width:1564px;height:20px;background:#fafafa;"></div>
<div class="r" style="left:353.0px;top:175px;width:1px;height:20px;background:#e9edf1;"></div>
<div class="r" style="left:373.0px;top:175px;width:1px;height:20px;background:#e9edf1;"></div>
<div class="r" style="left:393.0px;top:175px;width:1px;height:20px;background:#e9edf1;"></div>
<div class="r" style="left:453.0px;top:175px;width:1px;height:20px;background:#e9edf1;"></div>
<div class="r" style="left:513.0px;top:175px;width:1px;height:20px;background:#e9edf1;"></div>
<div class="r" style="left:633.0px;top:175px;width:1px;height:20px;background:#e9edf1;"></div>
<div class="r" style="left:833.0px;top:175px;width:1px;height:20px;background:#e9edf1;"></div>
<div class="r" style="left:903.0px;top:175px;width:1px;height:20px;background:#e9edf1;"></div>
<div class="r" style="left:993.0px;top:175px;width:1px;height:20px;background:#e9edf1;"></div>
<div class="r" style="left:1063.0px;top:175px;width:1px;height:20px;background:#e9edf1;"></div>
<div class="r" style="left:1133.0px;top:175px;width:1px;height:20px;background:#e9edf1;"></div>
<div class="r" style="left:1203.0px;top:175px;width:1px;height:20px;background:#e9edf1;"></div>
<div class="r" style="left:1293.0px;top:175px;width:1px;height:20px;background:#e9edf1;"></div>
<div class="r" style="left:1313.0px;top:175px;width:1px;height:20px;background:#e9edf1;"></div>
<div class="r" style="left:1403.0px;top:175px;width:1px;height:20px;background:#e9edf1;"></div>
<div class="r" style="left:1513.0px;top:175px;width:1px;height:20px;background:#e9edf1;"></div>
<div class="r" style="left:1634.0px;top:175px;width:1px;height:20px;background:#e9edf1;"></div>
<div class="r" style="left:338px;top:195px;width:1564px;height:1px;background:#e8ecef;"></div>
<div class="t" style="top:178px;font-size:11.5px;line-height:12px;color:#3a3a3a;right:1471px;text-align:right;">20</div>
<div class="t" style="top:178px;font-size:11.5px;line-height:12px;color:#555;left:459.5px;width:37px;overflow:hidden;white-space:nowrap;">Materia</div>
<svg class="r" style="left:502.5px;top:184px" width="8" height="5" viewBox="0 0 8 5"><path d="M0 0 h7.5 l-3.75 4z" fill="#8fb1cc"/></svg>
<div class="t" style="top:178px;font-size:11.5px;line-height:12px;color:#555;left:519.3px;">AB215</div>
<div class="t" style="top:178px;font-size:11.5px;line-height:12px;color:#1a1a1a;left:639.4px;">Fuel Filter</div>
<div class="t" style="top:178px;font-size:11.5px;line-height:12px;color:#333;right:1021.3px;text-align:right;">1.00</div>
<div class="t" style="top:178px;font-size:11.5px;line-height:12px;color:#333;right:931.5px;text-align:right;">1.00</div>
<div class="t" style="top:178px;font-size:11.5px;line-height:12px;color:#333;right:861px;text-align:right;">0.00</div>
<div class="t" style="top:178px;font-size:11.5px;line-height:12px;color:#333;right:791px;text-align:right;">150.00</div>
<div class="t" style="top:178px;font-size:11.5px;line-height:12px;color:#333;right:721px;text-align:right;">0.00%</div>
<div class="t" style="top:178px;font-size:11.5px;line-height:12px;color:#333;right:631.4000000000001px;text-align:right;">150.00</div>
<svg class="r" style="left:1298px;top:179px" width="12" height="12" viewBox="0 0 12 12"><circle cx="6" cy="5.7" r="5.7" fill="#2bc840"/></svg>
<div class="t" style="top:178px;font-size:11.5px;line-height:12px;color:#555;left:1319.5px;">Finished</div>
<svg class="r" style="left:1393px;top:184px" width="8" height="5" viewBox="0 0 8 5"><path d="M0 0 h7 l-3.5 4z" fill="#8fb1cc"/></svg>
<div class="t" style="top:180px;font-size:11.5px;line-height:12px;color:#222;left:1431px;">2024</div>
<div class="t" style="top:180px;font-size:11.5px;line-height:12px;color:#222;left:1465px;">/</div>
<div class="t" style="top:180px;font-size:11.5px;line-height:12px;color:#222;left:1479px;">2</div>
<div class="t" style="top:178px;font-size:11.5px;line-height:12px;color:#333;right:290.4000000000001px;text-align:right;">150.00</div>
<svg class="r" style="left:341px;top:159px" width="10" height="10" viewBox="0 0 10 10"><path d="M1 8.8 l0.8 -2.8 l5 -5 l2 2 l-5 5z" fill="#333"/></svg>
<div class="r" style="left:1902px;top:154px;width:16px;height:278px;background:#eceff2;"></div>
<svg class="r" style="left:1905px;top:159px" width="10" height="6" viewBox="0 0 10 6"><path d="M0.5 5 h8 l-4 -4.5z" fill="#b6c6d6"/></svg>
<svg class="r" style="left:1905px;top:418px" width="10" height="6" viewBox="0 0 10 6"><path d="M0.5 0.5 h8 l-4 4.5z" fill="#b6c6d6"/></svg>
<div class="r" style="left:337px;top:432px;width:1582px;height:26px;background:#f1f3f5;"></div>
<div class="r" style="left:1205px;top:435.5px;width:86px;height:19px;background:#fafafa;box-shadow:0 0 0 1px #e6e9ec;"></div>
<div class="r" style="left:1515px;top:435.5px;width:116px;height:19px;background:#fafafa;box-shadow:0 0 0 1px #e6e9ec;"></div>
<div class="t" style="top:440px;font-size:11.5px;line-height:12px;color:#333;right:631px;text-align:right;">1,400.00</div>
<div class="t" style="top:440px;font-size:11.5px;line-height:12px;color:#333;right:291px;text-align:right;">1,400.00</div>
<div class="r" style="left:336px;top:461px;width:1584px;height:5px;background:#f0f2f4;"></div>
<div class="t" style="top:473px;font-size:13px;line-height:15px;color:#111;left:340.6px;">Input</div>
<div class="t" style="top:473px;font-size:13px;line-height:15px;color:#3c3c46;left:382.8px;">Further info</div>
<div class="t" style="top:473px;font-size:13px;line-height:15px;color:#3c3c46;left:463.1px;letter-spacing:-0.6px;">RTF-Text</div>
<div class="t" style="top:473px;font-size:13px;line-height:15px;color:#3c3c46;left:524px;">Additional demands</div>
<div class="r" style="left:337px;top:494px;width:37px;height:2px;background:#0f5ea0;"></div>
<div class="r" style="left:338px;top:499px;width:1053px;height:323.5px;background:#e8ecef;border:1px solid #dde2e6;box-sizing:border-box;border-radius:2px;"></div>
<div class="t" style="top:504px;font-size:13.5px;line-height:15px;color:#3a72aa;left:348.6px;">Position</div>
<div class="r" style="left:345px;top:527px;width:138px;height:16px;background:#fafafa;"></div>
<div class="r" style="left:485px;top:527px;width:879px;height:16px;background:#fafafa;"></div>
<div class="t" style="top:529px;font-size:11.3px;line-height:12px;color:#505050;left:349.5px;">Pos no.</div>
<div class="r" style="left:345px;top:545px;width:138px;height:16px;background:#fafafa;"></div>
<div class="r" style="left:485px;top:545px;width:879px;height:16px;background:#fafafa;"></div>
<div class="t" style="top:547px;font-size:11.3px;line-height:12px;color:#505050;left:349.5px;">Part-Nr.</div>
<div class="r" style="left:345px;top:563px;width:138px;height:16px;background:#fafafa;"></div>
<div class="r" style="left:485px;top:563px;width:879px;height:16px;background:#fafafa;"></div>
<div class="t" style="top:565px;font-size:11.3px;line-height:12px;color:#505050;left:349.5px;">Description</div>
<div class="r" style="left:345px;top:581px;width:138px;height:16px;background:#fafafa;"></div>
<div class="r" style="left:485px;top:581px;width:879px;height:16px;background:#fafafa;"></div>
<div class="t" style="top:583px;font-size:11.3px;line-height:12px;color:#505050;left:349.5px;">Description 2</div>
<div class="r" style="left:345px;top:599px;width:138px;height:219px;background:#fafafa;"></div>
<div class="r" style="left:485px;top:599px;width:879px;height:219px;background:#fafafa;"></div>
<div class="t" style="top:601px;font-size:11.3px;line-height:12px;color:#505050;left:349.5px;">Text</div>
<div class="r" style="left:924px;top:527px;width:2px;height:16px;background:#e8ecef;"></div>
<div class="t" style="top:529px;font-size:11.3px;line-height:12px;color:#444;right:1001px;text-align:right;">10</div>
<div class="t" style="top:529px;font-size:11.3px;line-height:12px;color:#555;left:930.3px;">Material</div>
<svg class="r" style="left:470px;top:548px" width="7" height="10" viewBox="0 0 7 10"><path d="M0.8 0 l5.5 4.4 l-5.5 4.6z" fill="#42a5f5"/></svg>
<div class="t" style="top:547px;font-size:11.3px;line-height:12px;color:#555;left:489.6px;">MS1000</div>
<div class="t" style="top:565px;font-size:11.3px;line-height:12px;color:#1a1a1a;left:489.6px;">O Ring</div>
<svg class="r" style="left:1367px;top:545px" width="16" height="16" viewBox="0 0 16 16"><circle cx="6.5" cy="6.3" r="4.6" fill="none" stroke="#f5a623" stroke-width="1.8"/><path d="M10 9.8 l4.2 4.2" stroke="#f5a623" stroke-width="2.6" stroke-linecap="round"/></svg>
<div class="r" style="left:1395px;top:499px;width:523.5px;height:323.5px;background:#e8ecef;border:1px solid #dde2e6;box-sizing:border-box;border-radius:2px;"></div>
<div class="t" style="top:504px;font-size:13.5px;line-height:15px;color:#3a72aa;left:1405.5px;">Status</div>
<div class="r" style="left:1402px;top:527px;width:138px;height:16px;background:#fafafa;"></div>
<div class="r" style="left:1542px;top:527px;width:350px;height:16px;background:#fafafa;"></div>
<div class="t" style="top:529px;font-size:11.3px;line-height:12px;color:#505050;left:1406.5px;">Status</div>
<div class="r" style="left:1402px;top:545px;width:138px;height:16px;background:#fafafa;"></div>
<div class="r" style="left:1542px;top:545px;width:350px;height:16px;background:#fafafa;"></div>
<div class="t" style="top:547px;font-size:11.3px;line-height:12px;color:#505050;left:1406.5px;">Transferred</div>
<div class="r" style="left:1402px;top:581px;width:138px;height:16px;background:#fafafa;"></div>
<div class="r" style="left:1542px;top:581px;width:350px;height:16px;background:#fafafa;"></div>
<div class="t" style="top:583px;font-size:11.3px;line-height:12px;color:#505050;left:1406.5px;">Serial Nr/Batch Nr</div>
<div class="t" style="top:530px;font-size:11.3px;line-height:12px;color:#1a1a1a;left:1546.5px;">Finished</div>
<svg class="r" style="left:1883px;top:532px" width="8" height="6" viewBox="0 0 8 6"><path d="M0 0.5 h7 l-3.5 4z" fill="#a9c2d8"/></svg>
<div class="t" style="top:547px;font-size:11.3px;line-height:12px;color:#333;right:32.299999999999955px;text-align:right;">50.00</div>
<svg class="r" style="left:1527.5px;top:584px" width="7" height="10" viewBox="0 0 7 10"><path d="M0.5 0 l5.5 4.5 l-5.5 4.5z" fill="#42a5f5"/></svg>
<div class="r" style="left:1401px;top:616px;width:512px;height:36px;background:#0f62a0;border-radius:3px;"></div>
<div class="t" style="top:629px;font-size:10.8px;line-height:12px;color:#ffffff;left:1557.5px;width:200px;text-align:center;">Create LTLS</div>
<div class="r" style="left:338px;top:827px;width:525px;height:175px;background:#e8ecef;border:1px solid #dde2e6;box-sizing:border-box;border-radius:2px;"></div>
<div class="t" style="top:832px;font-size:13.5px;line-height:15px;color:#3a72aa;left:348.6px;">Required Quantity</div>
<div class="r" style="left:345px;top:855px;width:138px;height:16px;background:#fafafa;"></div>
<div class="t" style="top:857px;font-size:11.3px;line-height:12px;color:#505050;left:349.4px;">Price calculation</div>
<div class="r" style="left:345px;top:873px;width:138px;height:16px;background:#fafafa;"></div>
<div class="t" style="top:875px;font-size:11.3px;line-height:12px;color:#505050;left:349.4px;">Required Quantity</div>
<div class="r" style="left:345px;top:891px;width:138px;height:16px;background:#fafafa;"></div>
<div class="t" style="top:893px;font-size:11.3px;line-height:12px;color:#505050;left:349.4px;">Unit price</div>
<div class="r" style="left:345px;top:909px;width:138px;height:16px;background:#fafafa;"></div>
<div class="t" style="top:911px;font-size:11.3px;line-height:12px;color:#505050;left:349.4px;">Rebate</div>
<div class="r" style="left:345px;top:927px;width:138px;height:16px;background:#fafafa;"></div>
<div class="t" style="top:929px;font-size:11.3px;line-height:12px;color:#505050;left:349.4px;">Reservation date</div>
<div class="r" style="left:485px;top:855px;width:351px;height:16px;background:#fafafa;"></div>
<div class="t" style="top:858px;font-size:11.3px;line-height:12px;color:#444;left:489.5px;">Quantity x Price</div>
<div class="r" style="left:485px;top:873px;width:210px;height:16px;background:#fafafa;"></div>
<div class="r" style="left:697px;top:873px;width:139px;height:16px;background:#fafafa;"></div>
<div class="t" style="top:876px;font-size:11.3px;line-height:12px;color:#333;right:1230.3px;text-align:right;">50.00</div>
<div class="t" style="top:876px;font-size:11.3px;line-height:12px;color:#666;left:701.5px;">Stück</div>
<div class="r" style="left:485px;top:891px;width:210px;height:16px;background:#fafafa;"></div>
<div class="r" style="left:697px;top:891px;width:69px;height:16px;background:#fafafa;"></div>
<div class="r" style="left:768px;top:891px;width:68px;height:16px;background:#fafafa;"></div>
<div class="t" style="top:894px;font-size:11.3px;line-height:12px;color:#333;right:1230.3px;text-align:right;">25.00</div>
<div class="t" style="top:894px;font-size:11.3px;line-height:12px;color:#666;left:701.5px;">Euro</div>
<div class="t" style="top:894px;font-size:11.3px;line-height:12px;color:#222;left:772.5px;">Stück</div>
<svg class="r" style="left:827px;top:897px" width="7" height="5" viewBox="0 0 7 5"><path d="M0 0 h6.5 l-3.25 3.8z" fill="#a9c2d8"/></svg>
<div class="r" style="left:485px;top:909px;width:351px;height:16px;background:#fafafa;"></div>
<div class="t" style="top:912px;font-size:11.3px;line-height:12px;color:#333;right:1089px;text-align:right;">0.00%</div>
<div class="r" style="left:485px;top:927px;width:116px;height:16px;background:#fafafa;"></div>
<div class="r" style="left:603px;top:927px;width:116px;height:16px;background:#fafafa;"></div>
<div class="r" style="left:721px;top:927px;width:115px;height:16px;background:#fafafa;"></div>
<div class="t" style="top:930px;font-size:11.3px;line-height:12px;color:#222;left:489.5px;">CW</div>
<div class="t" style="top:930px;font-size:11.3px;line-height:12px;color:#333;right:1206px;text-align:right;">2</div>
<div class="t" style="top:930px;font-size:11.3px;line-height:12px;color:#333;right:1088.3px;text-align:right;">2024</div>
<svg class="r" style="left:592px;top:932.5px" width="7" height="5" viewBox="0 0 7 5"><path d="M0 0 h6.5 l-3.25 3.8z" fill="#a9c2d8"/></svg>
<div class="r" style="left:867px;top:827px;width:524px;height:175px;background:#e8ecef;border:1px solid #dde2e6;box-sizing:border-box;border-radius:2px;"></div>
<div class="t" style="top:832px;font-size:13.5px;line-height:15px;color:#3a72aa;left:877.5px;">Prices</div>
<div class="r" style="left:874px;top:855px;width:138px;height:16px;background:#fafafa;"></div>
<div class="r" style="left:1014px;top:855px;width:350px;height:16px;background:#fafafa;"></div>
<div class="t" style="top:857px;font-size:11.3px;line-height:12px;color:#505050;left:878.5px;">Price origin</div>
<div class="t" style="top:858px;font-size:11.3px;line-height:12px;color:#444;left:1018px;">Supl specific price</div>
<div class="r" style="left:874px;top:873px;width:138px;height:16px;background:#fafafa;"></div>
<div class="r" style="left:1014px;top:873px;width:350px;height:16px;background:#fafafa;"></div>
<div class="t" style="top:875px;font-size:11.3px;line-height:12px;color:#505050;left:878.5px;">Quantity unit</div>
<div class="t" style="top:876px;font-size:11.3px;line-height:12px;color:#444;left:1018px;">Stück</div>
<div class="r" style="left:874px;top:891px;width:138px;height:16px;background:#fafafa;"></div>
<div class="r" style="left:1014px;top:891px;width:350px;height:16px;background:#fafafa;"></div>
<div class="t" style="top:893px;font-size:11.3px;line-height:12px;color:#505050;left:878.5px;">Price unit</div>
<div class="t" style="top:893px;font-size:11.3px;line-height:12px;color:#555;right:560px;text-align:right;">1.00</div>
<div class="r" style="left:874px;top:909px;width:138px;height:16px;background:#fafafa;"></div>
<div class="r" style="left:1014px;top:909px;width:350px;height:16px;background:#fafafa;"></div>
<div class="t" style="top:911px;font-size:11.3px;line-height:12px;color:#505050;left:878.5px;">Factor</div>
<div class="t" style="top:911px;font-size:11.3px;line-height:12px;color:#555;right:560px;text-align:right;">1.0000</div>
<div class="r" style="left:874px;top:927px;width:138px;height:16px;background:#fafafa;"></div>
<div class="r" style="left:1014px;top:927px;width:350px;height:16px;background:#fafafa;"></div>
<div class="t" style="top:929px;font-size:11.3px;line-height:12px;color:#505050;left:878.5px;">Total position price</div>
<div class="t" style="top:929px;font-size:11.3px;line-height:12px;color:#555;right:560px;text-align:right;">1,250.00</div>
<div class="r" style="left:874px;top:945px;width:138px;height:16px;background:#fafafa;"></div>
<div class="r" style="left:1014px;top:945px;width:350px;height:16px;background:#fafafa;"></div>
<div class="t" style="top:947px;font-size:11.3px;line-height:12px;color:#505050;left:878.5px;">Net</div>
<div class="t" style="top:947px;font-size:11.3px;line-height:12px;color:#555;right:560px;text-align:right;">1,400.00</div>
<div class="r" style="left:874px;top:963px;width:138px;height:16px;background:#fafafa;"></div>
<div class="r" style="left:1014px;top:963px;width:350px;height:16px;background:#fafafa;"></div>
<div class="t" style="top:965px;font-size:11.3px;line-height:12px;color:#505050;left:878.5px;">Gross</div>
<div class="t" style="top:965px;font-size:11.3px;line-height:12px;color:#555;right:560px;text-align:right;">1,624.00</div>
<div class="r" style="left:1395px;top:827px;width:523.5px;height:175px;background:#e8ecef;border:1px solid #dde2e6;box-sizing:border-box;border-radius:2px;"></div>
<div class="t" style="top:832px;font-size:13.5px;line-height:15px;color:#3a72aa;left:1405.4px;">Disposition</div>
<div class="r" style="left:1402px;top:855px;width:118px;height:16px;background:#fafafa;"></div>
<div class="r" style="left:1522px;top:855px;width:344px;height:16px;background:#fafafa;"></div>
<div class="r" style="left:1868px;top:855px;width:24px;height:16px;background:#fafafa;"></div>
<div class="t" style="top:857px;font-size:11.3px;line-height:12px;color:#505050;left:1406px;">Available Qty</div>
<div class="t" style="top:857px;font-size:11.3px;line-height:12px;color:#444;right:57.700000000000045px;text-align:right;">92.00</div>
<div class="t" style="top:857px;font-size:11.3px;line-height:12px;color:#444;left:1872px;">(+)</div>
<div class="r" style="left:1402px;top:873px;width:118px;height:16px;background:#fafafa;"></div>
<div class="r" style="left:1522px;top:873px;width:344px;height:16px;background:#fafafa;"></div>
<div class="r" style="left:1868px;top:873px;width:24px;height:16px;background:#fafafa;"></div>
<div class="t" style="top:875px;font-size:11.3px;line-height:12px;color:#505050;left:1406px;">Ordered</div>
<div class="t" style="top:875px;font-size:11.3px;line-height:12px;color:#444;right:57.700000000000045px;text-align:right;">6.00</div>
<div class="t" style="top:875px;font-size:11.3px;line-height:12px;color:#444;left:1872px;">(+)</div>
<div class="r" style="left:1402px;top:891px;width:118px;height:16px;background:#fafafa;"></div>
<div class="r" style="left:1522px;top:891px;width:344px;height:16px;background:#fafafa;"></div>
<div class="r" style="left:1868px;top:891px;width:24px;height:16px;background:#fafafa;"></div>
<div class="t" style="top:893px;font-size:11.3px;line-height:12px;color:#505050;left:1406px;">Production</div>
<div class="t" style="top:893px;font-size:11.3px;line-height:12px;color:#444;right:57.700000000000045px;text-align:right;">0.00</div>
<div class="t" style="top:893px;font-size:11.3px;line-height:12px;color:#444;left:1872px;">(+)</div>
<div class="r" style="left:1402px;top:909px;width:118px;height:16px;background:#fafafa;"></div>
<div class="r" style="left:1522px;top:909px;width:344px;height:16px;background:#fafafa;"></div>
<div class="r" style="left:1868px;top:909px;width:24px;height:16px;background:#fafafa;"></div>
<div class="t" style="top:911px;font-size:11.3px;line-height:12px;color:#505050;left:1406px;">Reserved</div>
<div class="t" style="top:911px;font-size:11.3px;line-height:12px;color:#444;right:57.700000000000045px;text-align:right;">0.00</div>
<div class="t" style="top:911px;font-size:11.3px;line-height:12px;color:#444;left:1872px;">(-)</div>
<div class="r" style="left:1402px;top:927px;width:118px;height:16px;background:#fafafa;"></div>
<div class="r" style="left:1523px;top:927px;width:343px;height:16px;background:#fafafa;"></div>
<div class="r" style="left:1868px;top:927px;width:24px;height:16px;background:#fafafa;"></div>
<div class="t" style="top:929px;font-size:11.3px;line-height:12px;color:#505050;left:1406px;">Available</div>
<div class="t" style="top:929px;font-size:11.3px;line-height:12px;color:#444;right:57.700000000000045px;text-align:right;">98.00</div>
<div class="t" style="top:929px;font-size:11.3px;line-height:12px;color:#444;left:1874.4px;">(=)</div>
<div class="r" style="left:1521px;top:926px;width:372px;height:1px;background:#111;"></div>

<div class="r" style="left:0px;top:1010px;width:1920px;height:22px;background:#1f2430;"></div>

<svg class="r" style="left:7px;top:1018px" width="10" height="10" viewBox="0 0 10 10"><circle cx="4.8" cy="4.8" r="4.5" fill="#4cbb4c"/></svg>

<div class="t" style="top:1016px;font-size:10.8px;line-height:12px;color:#b4b8bd;right:12.700000000000045px;text-align:right;">DEMO (aba)</div>

</body></html>
